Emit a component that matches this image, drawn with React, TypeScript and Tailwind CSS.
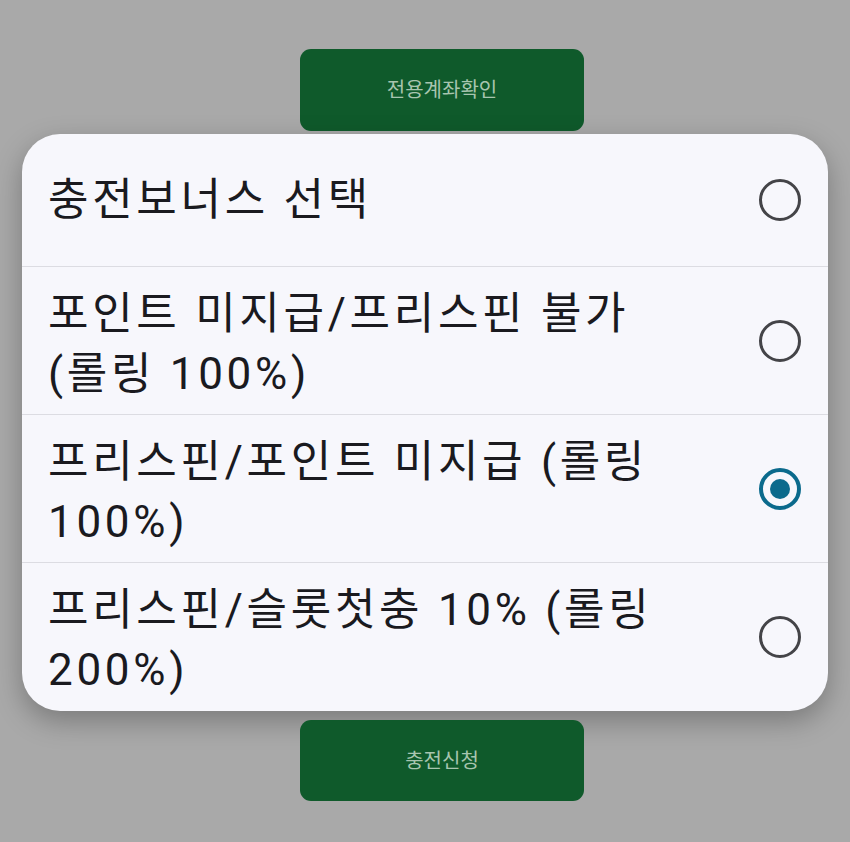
import React, { useState } from 'react';

const options = [
  '포인트 미지급/프리스핀 불가 (롤링 100%)',
  '프리스핀/포인트 미지급 (롤링 100%)',
  '프리스핀/슬롯첫충 10% (롤링 200%)',
];

const Radio: React.FC<{ checked: boolean }> = ({ checked }) => (
  <div
    className={`w-[42px] h-[42px] shrink-0 rounded-full flex items-center justify-center ${
      checked ? 'border-[4px] border-[#0b6a8c]' : 'border-[3.5px] border-[#444448]'
    }`}
  >
    {checked && <div className="w-[20px] h-[20px] rounded-full bg-[#0b6a8c]" />}
  </div>
);

const App: React.FC = () => {
  const [selected, setSelected] = useState(1);

  return (
    <div
      className="min-h-[842px] bg-[#a9a9a9] flex flex-col items-start pt-[49px]"
      style={{ fontFamily: "Roboto, 'Noto Sans CJK KR', sans-serif" }}
    >
      <button className="ml-[300px] w-[284px] h-[82px] rounded-[11px] bg-[#0f5a2b] text-[#a7c5af] text-[20px]">
        전용계좌확인
      </button>

      <div className="ml-[22px] mt-[3px] w-[806px] bg-[#f7f7fc] rounded-[38px] shadow-[0_10px_28px_rgba(0,0,0,0.28)] overflow-hidden text-[#1a1a1f] text-[44px] leading-[60px] tracking-[3.7px]">
        <div className="h-[133px] flex items-center pl-[26px] pr-[27px] border-b border-[#dcdce2]">
          <div className="flex-1">충전보너스 선택</div>
          <Radio checked={selected === -1} />
        </div>
        {options.map((label, i) => (
          <div
            key={i}
            onClick={() => setSelected(i)}
            className={`h-[148px] flex items-center pl-[26px] pr-[27px] cursor-pointer ${
              i < options.length - 1 ? 'border-b border-[#dcdce2]' : ''
            }`}
          >
            <div className="flex-1 mr-[54px] pt-[6px]">{label}</div>
            <Radio checked={selected === i} />
          </div>
        ))}
      </div>

      <button className="ml-[300px] mt-[9px] w-[284px] h-[81px] rounded-[11px] bg-[#0f5a2b] text-[#a7c5af] text-[20px]">
        충전신청
      </button>
    </div>
  );
};

export default App;
